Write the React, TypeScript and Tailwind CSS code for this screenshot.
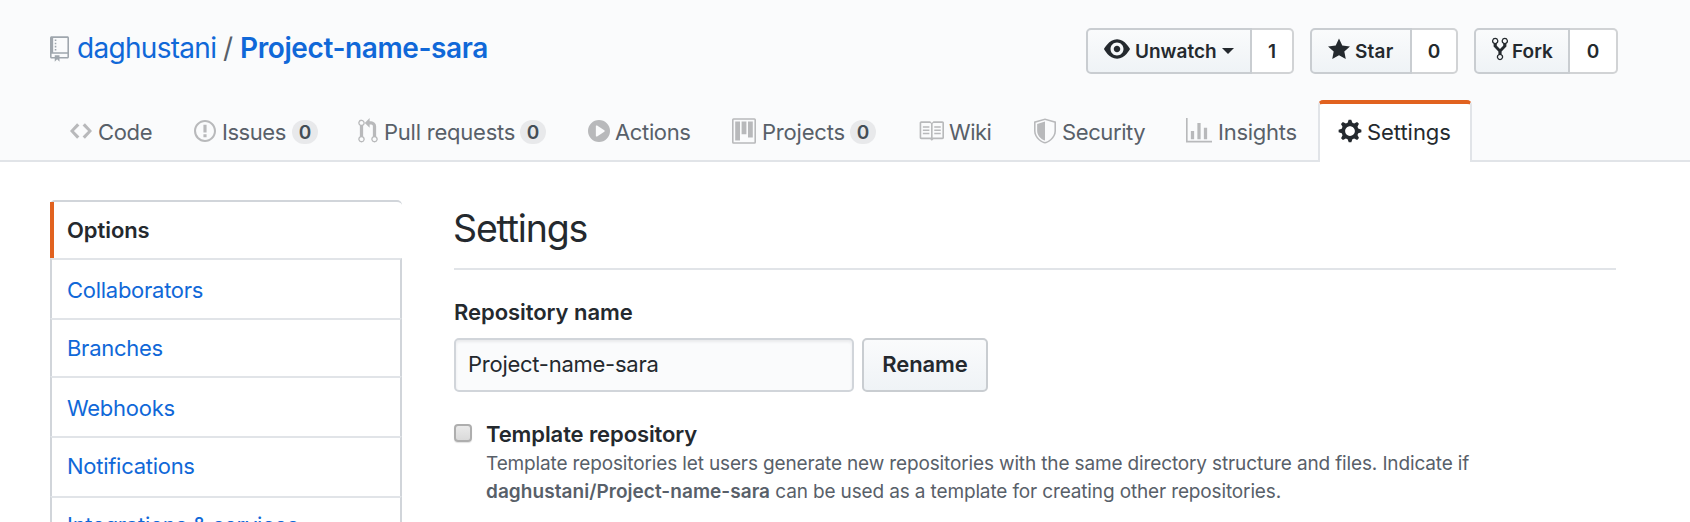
import type { ReactNode } from "react";

const paths = {
  repo: "M4 9H3V8h1v1zm0-3H3v1h1V6zm0-2H3v1h1V4zm0-2H3v1h1V2zm8-1v12c0 .55-.45 1-1 1H6v2l-1.5-1.5L3 16v-2H1c-.55 0-1-.45-1-1V1c0-.55.45-1 1-1h10c.55 0 1 .45 1 1zm-1 10H1v2h2v-1h3v1h5v-2zm0-10H2v9h9V1z",
  eye: "M8.06 2C3 2 0 8 0 8s3 6 8.06 6C13 14 16 8 16 8s-3-6-7.94-6zM8 12c-2.2 0-4-1.78-4-4 0-2.2 1.8-4 4-4 2.22 0 4 1.8 4 4 0 2.22-1.78 4-4 4zm2-4c0 1.11-.89 2-2 2-1.11 0-2-.89-2-2 0-1.11.89-2 2-2 1.11 0 2 .89 2 2z",
  star: "M14 6l-4.9-.64L7 1 4.9 5.36 0 6l3.6 3.26L2.67 14 7 11.67 11.33 14l-.93-4.74L14 6z",
  fork: "M8 1a1.993 1.993 0 00-1 3.72V6L5 8 3 6V4.72A1.993 1.993 0 002 1a1.993 1.993 0 00-1 3.72V6.5l3 3v1.78A1.993 1.993 0 005 15a1.993 1.993 0 001-3.72V9.5l3-3V4.72A1.993 1.993 0 008 1zM2 4.2C1.34 4.2.8 3.65.8 3c0-.65.55-1.2 1.2-1.2.65 0 1.2.55 1.2 1.2 0 .65-.55 1.2-1.2 1.2zm3 10c-.66 0-1.2-.55-1.2-1.2 0-.65.55-1.2 1.2-1.2.65 0 1.2.55 1.2 1.2 0 .65-.55 1.2-1.2 1.2zm3-10c-.66 0-1.2-.55-1.2-1.2 0-.65.55-1.2 1.2-1.2.65 0 1.2.55 1.2 1.2 0 .65-.55 1.2-1.2 1.2z",
  code: "M9.5 3L8 4.5 11.5 8 8 11.5 9.5 13 14 8 9.5 3zm-5 0L0 8l4.5 5L6 11.5 2.5 8 6 4.5 4.5 3z",
  issue: "M7 2.3c3.14 0 5.7 2.56 5.7 5.7s-2.56 5.7-5.7 5.7A5.71 5.71 0 011.3 8c0-3.14 2.56-5.7 5.7-5.7zM7 1C3.14 1 0 4.14 0 8s3.14 7 7 7 7-3.14 7-7-3.14-7-7-7zm1 3H6v5h2V4zm0 6H6v2h2v-2z",
  pull: "M11 11.28V5c-.03-.78-.34-1.47-.94-2.06C9.46 2.35 8.78 2.03 8 2H7V0L4 3l3 3V4h1c.27.02.48.11.69.31.21.2.3.42.31.69v6.28A1.993 1.993 0 0010 15a1.993 1.993 0 001-3.72zm-1 2.92c-.66 0-1.2-.55-1.2-1.2 0-.65.55-1.2 1.2-1.2.65 0 1.2.55 1.2 1.2 0 .65-.55 1.2-1.2 1.2zM4 3c0-1.11-.89-2-2-2a1.993 1.993 0 00-1 3.72v6.56A1.993 1.993 0 002 15a1.993 1.993 0 001-3.72V4.72c.59-.34 1-.98 1-1.72zm-.8 10c0 .66-.55 1.2-1.2 1.2-.65 0-1.2-.55-1.2-1.2 0-.65.55-1.2 1.2-1.2.65 0 1.2.55 1.2 1.2zM2 4.2C1.34 4.2.8 3.65.8 3c0-.65.55-1.2 1.2-1.2.65 0 1.2.55 1.2 1.2 0 .65-.55 1.2-1.2 1.2z",
  play: "M14 8A7 7 0 110 8a7 7 0 0114 0zm-8.223 3.482l4.599-3.066a.5.5 0 000-.832L5.777 4.518A.5.5 0 005 4.934v6.132a.5.5 0 00.777.416z",
  project: "M10 12h3V2h-3v10zm-4-2h3V2H6v8zm-4 4h3V2H2v12zm-1 1h13V1H1v14zM14 0H1a1 1 0 00-1 1v14a1 1 0 001 1h13a1 1 0 001-1V1a1 1 0 00-1-1z",
  book: "M3 5h4v1H3V5zm0 3h4V7H3v1zm0 2h4V9H3v1zm11-5h-4v1h4V5zm0 2h-4v1h4V7zm0 2h-4v1h4V9zm2-6v9c0 .55-.45 1-1 1H9.5l-1 1-1-1H2c-.55 0-1-.45-1-1V3c0-.55.45-1 1-1h5.5l1 1 1-1H15c.55 0 1 .45 1 1zm-8 .5L7.5 3H2v9h6V3.5zm7-.5H9.5l-.5.5V12h6V3z",
  shield: "M0 2l7-2 7 2v6.02C14 12.69 8.69 16 7 16c-1.69 0-7-3.31-7-7.98V2zm1 .75L7 1l6 1.75v5.268C13 12.104 8.449 15 7 15c-1.449 0-6-2.896-6-6.982V2.75zm1 .75L7 2v12c-1.207 0-5-2.482-5-5.985V3.5z",
  graph: "M16 14v1H0V0h1v14h15zM5 13H3V8h2v5zm4 0H7V3h2v10zm4 0h-2V6h2v7z",
  gear: "M14 8.77v-1.6l-1.94-.64-.45-1.09.88-1.84-1.13-1.13-1.81.91-1.09-.45-.69-1.92h-1.6l-.63 1.94-1.11.45-1.84-.88-1.13 1.13.91 1.81-.45 1.09L0 7.23v1.59l1.94.64.45 1.09-.88 1.84 1.13 1.13 1.81-.91 1.09.45.69 1.92h1.59l.63-1.94 1.11-.45 1.84.88 1.13-1.13-.92-1.81.47-1.09L14 8.75v.02zM7 11c-1.66 0-3-1.34-3-3s1.34-3 3-3 3 1.34 3 3-1.34 3-3 3z",
};

function Icon({ name, w, className }: { name: keyof typeof paths; w: number; className: string }) {
  return (
    <svg viewBox={`0 0 ${w} 16`} className={`shrink-0 ${className}`} fill="currentColor" fillRule="evenodd" aria-hidden="true">
      <path d={paths[name]} />
    </svg>
  );
}

interface Tab {
  label: string;
  icon: keyof typeof paths;
  w: number;
  item: string;
  iconBox: string;
  text: string;
  count?: number;
}

const tabs: Tab[] = [
  { label: "Code", icon: "code", w: 14, item: "w-[124px]", iconBox: "w-[22px] mr-[6px]", text: "tracking-[-0.33px]" },
  { label: "Issues", icon: "issue", w: 14, item: "w-[164px]", iconBox: "w-[22px] mr-[6px]", text: "w-[70px] tracking-[-0.45px]", count: 0 },
  { label: "Pull requests", icon: "pull", w: 12, item: "w-[230px]", iconBox: "w-5 mr-[6px]", text: "w-[136px] tracking-[-0.23px]", count: 0 },
  { label: "Actions", icon: "play", w: 14, item: "w-36", iconBox: "w-[22px] mr-[5px]", text: "tracking-[-0.35px]" },
  { label: "Projects", icon: "project", w: 15, item: "w-[186px]", iconBox: "w-6 mr-[6px]", text: "w-[88px] tracking-[-0.2px]", count: 0 },
  { label: "Wiki", icon: "book", w: 16, item: "w-[116px]", iconBox: "w-[26px] mr-[5px]", text: "tracking-[-0.5px]" },
  { label: "Security", icon: "shield", w: 14, item: "w-[152px]", iconBox: "w-[22px] mr-[6px]", text: "tracking-[-0.4px]" },
  { label: "Insights", icon: "graph", w: 16, item: "w-[132px]", iconBox: "w-[26px] mr-[6px]", text: "tracking-[-0.25px]" },
];

function SocialButton({ icon, label, count, left, right }: { icon: ReactNode; label: ReactNode; count: number; left: string; right: string }) {
  return (
    <div className="flex h-[46px] text-[19px] leading-[46px] font-semibold text-[#24292e]">
      <button className={`flex items-center rounded-l-[5px] border-2 border-[#c9cdd1] bg-linear-to-b from-[#fafbfc] to-[#eff3f6] ${left}`}>
        {icon}
        {label}
      </button>
      <a className={`flex items-center justify-center rounded-r-[5px] border-2 border-l-0 border-[#d1d3d5] bg-white pt-[2px] ${right}`}>{count}</a>
    </div>
  );
}

const menu = [
  { label: "Collaborators", row: "h-[60px] pt-[2px]" },
  { label: "Branches", row: "h-[58px]" },
  { label: "Webhooks", row: "h-[60px] pt-[2px]" },
  { label: "Notifications", row: "h-[60px] pb-[2px]" },
  { label: "Integrations & services", row: "h-[60px] pb-[3px]" },
];

export default function App() {
  return (
    <div className="h-[522px] overflow-hidden bg-white font-['Inter',sans-serif] text-[22px] text-[#24292e]">
      <header className="flex h-[162px] flex-col border-b-2 border-[#e1e4e8] bg-[#fafbfc]">
        <div className="flex h-[100px] shrink-0 items-start pt-7 pr-[72px] pl-[50px]">
          <Icon name="repo" w={12} className="mt-2 h-[26px] w-[19px] text-[#9fa6ad]" />
          <h1 className="ml-[8px] flex h-10 items-center text-[28px] whitespace-nowrap text-[#1068d8]">
            <a className="w-[146px] tracking-[-0.7px]">daghustani</a>
            <span className="w-[17px] text-[#586069]">/</span>
            <a className="font-semibold tracking-[-0.4px]">Project-name-sara</a>
          </h1>
          <div className="ml-auto flex gap-4">
            <SocialButton
              icon={<Icon name="eye" w={16} className="mb-[5px] h-[26px] w-[26px]" />}
              label={
                <>
                  <span className="ml-[5px] pt-[2px]">Unwatch</span>
                  <span className="ml-[5px] border-x-6 border-t-6 border-x-transparent border-t-current" />
                </>
              }
              count={1}
              left="w-[166px] pl-4"
              right="w-[42px]"
            />
            <SocialButton
              icon={<Icon name="star" w={14} className="mb-[4px] h-[25px] w-[22px]" />}
              label={<span className="ml-[5px] pt-[2px] tracking-[0.2px]">Star</span>}
              count={0}
              left="w-[102px] pl-4"
              right="w-[46px]"
            />
            <SocialButton
              icon={<Icon name="fork" w={10} className="mb-[4px] h-[26px] w-4" />}
              label={<span className="ml-[4px] pt-[2px]">Fork</span>}
              count={0}
              left="w-24 pl-4"
              right="w-12"
            />
          </div>
        </div>
        <nav className="flex h-[62px] shrink-0 pl-[70px] leading-6 whitespace-nowrap text-[#586069]">
          {tabs.map((t) => (
            <a key={t.label} className={`flex shrink-0 items-start pt-5 ${t.item}`}>
              <Icon name={t.icon} w={t.w} className={`-mt-[2px] h-[26px] text-[#b8b9bb] ${t.iconBox}`} />
              <span className={t.text}>{t.label}</span>
              {t.count !== undefined && (
                <span className="h-6 w-[26px] rounded-full bg-[#e8e9eb] text-center text-[19px] leading-[26px] font-semibold text-[#444d56]">{t.count}</span>
              )}
            </a>
          ))}
          <a className="flex w-[154px] shrink-0 items-start rounded-t-[5px] border-x-2 border-t-4 border-x-[#e1e4e8] border-t-[#e16220] bg-white pt-4 pl-[18px] text-[#24292e]">
            <Icon name="gear" w={14} className="-mt-[2px] mr-[5px] h-[26px] w-6" />
            <span className="tracking-[-0.05px]">Settings</span>
          </a>
        </nav>
      </header>

      <div className="flex pt-[38px] pl-[50px]">
        <aside className="w-[352px] shrink-0 rounded-t-[5px] border-t-2 border-[#d1d5da]">
          <a className="flex h-14 items-center border-l-4 border-[#e16220] pl-[13px] font-semibold tracking-[-0.07px]">Options</a>
          {menu.map((m) => (
            <a key={m.label} className={`flex items-center border-x-2 border-t-2 border-x-[#d1d5da] border-t-[#e1e4e8] pl-[15px] tracking-[-0.27px] text-[#1068d8] ${m.row}`}>
              {m.label}
            </a>
          ))}
        </aside>

        <main className="ml-[52px] w-[1162px]">
          <h2 className="flex h-[70px] items-center border-b-2 border-[#e1e4e8] pb-[10px] text-[37.5px] tracking-[-1.17px]">
            <span className="-ml-px">Settings</span>
          </h2>
          <label className="mt-[26px] block h-8 leading-8 font-semibold tracking-[-0.05px]">Repository name</label>
          <div className="mt-[10px] flex h-[54px] gap-2">
            <input
              defaultValue="Project-name-sara"
              className="w-[400px] rounded-[5px] border-2 border-[#d1d5da] bg-[#fafbfc] px-[12px] pb-[2px] tracking-[-0.26px] shadow-[inset_0_2px_3px_rgba(27,31,35,0.075)] outline-none"
            />
            <button className="w-[126px] rounded-[5px] border-2 border-[#c9cdd1] bg-linear-to-b from-[#fafbfc] to-[#eff3f6] pb-[2px] font-semibold tracking-[-0.12px]">Rename</button>
          </div>
          <div className="mt-[26px] flex items-start">
            <span role="checkbox" aria-checked="false" className="mt-[6px] h-[18px] w-[18px] shrink-0 rounded-[4px] border-2 border-[#aeaeae] bg-linear-to-b from-[#eaeaea] to-[#dadada] shadow-[0_1px_1px_rgba(0,0,0,0.12)]" />
            <div className="ml-[14px] whitespace-nowrap">
              <div className="h-8 leading-8 font-semibold tracking-[-0.1px]">Template repository</div>
              <p className="text-[19px] leading-7 tracking-[-0.14px] text-[#586069]">
                Template repositories let users generate new repositories with the same directory structure and files. Indicate if
                <br />
                <strong className="font-semibold tracking-[0.05px]">daghustani/Project-name-sara</strong> can be used as a template for creating other repositories.
              </p>
            </div>
          </div>
        </main>
      </div>
    </div>
  );
}
